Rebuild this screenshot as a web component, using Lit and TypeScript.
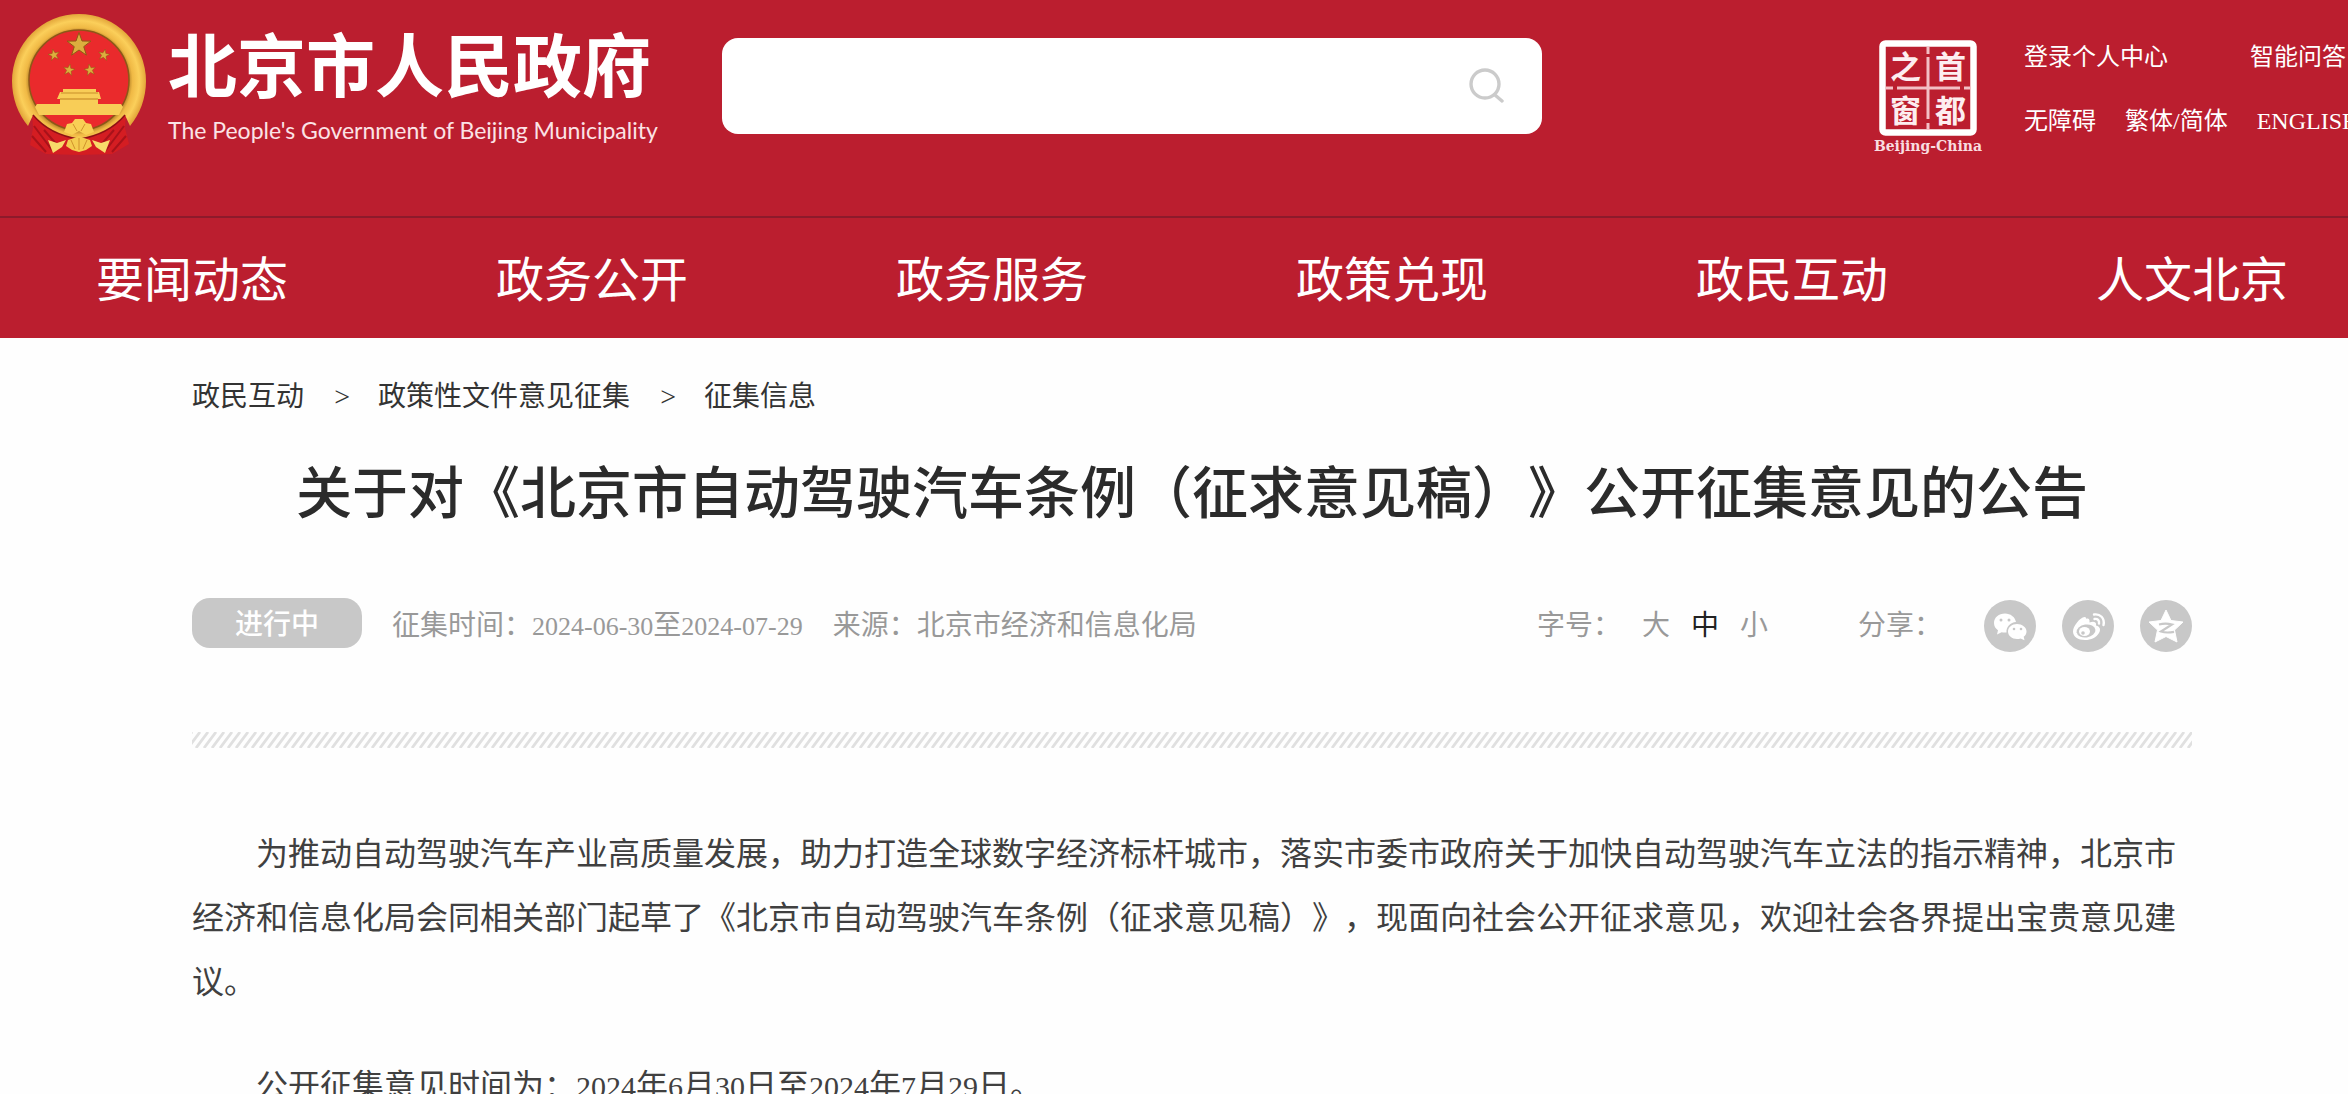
import { LitElement, html, css, svg } from "lit";
import { customElement, state } from "lit/decorators.js";

const NAV = ["要闻动态", "政务公开", "政务服务", "政策兑现", "政民互动", "人文北京"];
const CRUMBS = ["政民互动", "政策性文件意见征集", "征集信息"];
const SIZES = ["大", "中", "小"];

const STAR = "M0-10 2.4-3.2 9.5-3.1 3.8 1.3 5.9 8.1 0 4-5.9 8.1-3.8 1.3-9.5-3.1-2.4-3.2Z";
const star = (x: number, y: number, s: number, r = 0) =>
  svg`<path d=${STAR} transform="translate(${x} ${y}) rotate(${r}) scale(${s})" fill="#dcae3e" stroke="#8f5a14" stroke-width="0.8"/>`;

@customElement("national-emblem")
export class NationalEmblem extends LitElement {
  static styles = css`
    :host { display: block; }
    .art { display: block; width: 134px; height: 142px; }
  `;
  render() {
    return html`<svg class="art" viewBox="12 14 134 142" role="img" aria-label="国徽">
      <defs>
        <radialGradient id="gold" gradientUnits="userSpaceOnUse" cx="79" cy="81" r="67">
          <stop offset="0.74" stop-color="#b8862a" />
          <stop offset="0.8" stop-color="#f0b945" />
          <stop offset="0.9" stop-color="#fbcf5a" />
          <stop offset="1" stop-color="#e3a63a" />
        </radialGradient>
      </defs>
      <path d="M32 112 33 128 30 145 46 154 79 155 112 154 129 144 125 128 126 112Z" fill="#d41d22" />
      <path d="M34 126 52 150M32 136 46 152M124 126 106 150M126 136 112 152M44 130 58 146M114 130 100 146" stroke="#a8121a" stroke-width="2" fill="none" />
      <path d="M79 14A67 67 0 0 0 12 81C12 98 18 114 28 126L33 115C44 128 58 136 79 139C100 136 114 128 125 115L130 126C140 114 146 98 146 81A67 67 0 0 0 79 14Z" fill="url(#gold)" />
      <path d="M33 115C44 128 58 136 79 139C100 136 114 128 125 115" fill="none" stroke="#8f1015" stroke-width="1.5" />
      <circle cx="79" cy="80" r="50" fill="#ea2a2c" stroke="#8e5618" stroke-width="1.5" />
      ${star(79, 45, 1.25)}${star(54, 55, 0.6, -12)}${star(104, 55, 0.6, 12)}${star(69, 70, 0.6, 10)}${star(90, 70, 0.6, -10)}
      <path d="M63 89H96V92H99L101 99H98V104H121L123 107 119 115H39L35 107 37 104H60V99H57L60 92H63Z" fill="#f8cd57" />
      <path d="M61 93H98" stroke="#d9a338" stroke-width="1.5" />
      <path d="M60 99H98" stroke="#d39a33" stroke-width="1.5" />
      <path d="M64 132 67 124 72 123 75 119H83L86 123 91 124 94 132 86 135 79 131 72 135Z" fill="#f9cf55" />
      <path d="M66 146 68 140 74 138 79 136 84 138 90 140 92 146 86 150 79 152 72 150Z" fill="#f5cc50" />
      <path d="M48 140 57 143 66 140 62 147 53 153ZM110 140 101 143 92 140 96 147 105 153Z" fill="#f8da6a" />
      <path d="M71 140 75 149M79 138V150M87 140 83 149M73 124 77 131M85 124 81 131" stroke="#d0932c" stroke-width="1" fill="none" />
    </svg>`;
  }
}

@customElement("site-header")
export class SiteHeader extends LitElement {
  static styles = css`
    :host { display: block; background: #bb1e2f; color: #fff; text-spacing-trim: space-all; }
    a { color: inherit; text-decoration: none; white-space: nowrap; }
    .top { display: flex; align-items: flex-start; height: 216px; overflow: hidden; border-bottom: 2px solid #8d1a2b; }
    .brand { display: flex; align-items: flex-start; gap: 22px; padding: 14px 0 0 12px; flex: 0 0 710px; }
    .names { padding-top: 8px; white-space: nowrap; }
    .cn { font: 700 69px/80px "Noto Sans CJK SC", sans-serif; }
    .en { font: 400 23px/36px Lato, sans-serif; color: #fbe3e6; padding-top: 10px; }
    .search { display: flex; align-items: center; flex: 0 0 820px; height: 96px; margin-top: 38px; background: #fff; border-radius: 16px; overflow: hidden; }
    .field { flex: 1; min-width: 0; height: 100%; border: 0; outline: 0; padding: 0 28px; font: 32px "Liberation Serif", "Noto Sans CJK SC", serif; background: none; }
    .go { display: block; border: 0; background: none; padding: 0 38px 0 0; }
    .go svg { display: block; width: 36px; height: 36px; }
    .aside { display: flex; flex: 1; justify-content: flex-end; gap: 42px; min-width: 0; }
    .seal { display: flex; flex-direction: column; align-items: center; margin-top: 40px; }
    .seal svg { display: block; width: 98px; height: 96px; }
    .seal text { font: 700 31px "Noto Sans CJK SC", sans-serif; fill: #fdeef0; }
    .sealname { font: 700 14px/20px "DejaVu Serif", serif; color: #f9dde0; }
    .links { display: flex; flex-direction: column; gap: 28px; margin-top: 39px; width: 324px; font: 24px/36px "Liberation Serif", "Noto Sans CJK SC", serif; }
    .line { display: flex; }
    .wide { gap: 82px; }
    .narrow { gap: 29px; }
    .nav { display: flex; justify-content: space-between; padding: 6px 60px 0 96px; font: 48px/114px "Liberation Serif", "Noto Sans CJK SC", serif; }
  `;
  render() {
    return html`<header>
      <div class="top">
        <div class="brand">
          <national-emblem></national-emblem>
          <div class="names">
            <div class="cn">北京市人民政府</div>
            <div class="en">The People's Government of Beijing Municipality</div>
          </div>
        </div>
        <form class="search" role="search">
          <input class="field" type="search" aria-label="搜索" />
          <button class="go" type="button" aria-label="搜索">
            <svg viewBox="0 0 36 36" fill="none" stroke="#cbcbcb" stroke-width="3.4" stroke-linecap="round">
              <circle cx="17" cy="16" r="14" /><path d="M27 27 34 33" />
            </svg>
          </button>
        </form>
        <div class="aside">
          <a class="seal" href="#">
            <svg viewBox="0 0 98 96" role="img" aria-label="首都之窗">
              <rect x="3.5" y="3.5" width="91" height="89" rx="3" fill="none" stroke="#fff" stroke-width="6.5" />
              <path d="M49 7V14M49 17V79M49 83V90M7 48H14M18 48H81M85 48H92" stroke="#f3bfc5" stroke-width="3" />
              <text x="11" y="38">之</text><text x="56" y="38">首</text>
              <text x="11" y="82">窗</text><text x="56" y="82">都</text>
            </svg>
            <span class="sealname">Beijing-China</span>
          </a>
          <div class="links">
            <div class="line wide"><a href="#">登录个人中心</a><a href="#">智能问答</a></div>
            <div class="line narrow"><a href="#">无障碍</a><a href="#">繁体/简体</a><a href="#">ENGLISH</a></div>
          </div>
        </div>
      </div>
      <nav class="nav">${NAV.map((n) => html`<a href="#">${n}</a>`)}</nav>
    </header>`;
  }
}

@customElement("app-root")
export class AppRoot extends LitElement {
  @state() private size = "中";

  static styles = css`
    :host { display: block; height: 100vh; overflow-x: hidden; overflow-y: auto; scrollbar-width: none; background: #fefefe; color: #333; font-family: "Liberation Serif", "Noto Sans CJK SC", serif; text-spacing-trim: space-all; }
    a { color: inherit; text-decoration: none; }
    .page { padding: 39px 156px 0 192px; }
    .crumbs { display: flex; gap: 28px; font-size: 28px; line-height: 40px; }
    .sep { width: 18px; text-align: right; }
    .title { margin: 35px 0 0; font-size: 56px; line-height: 84px; font-weight: 500; text-align: center; color: #2b2b2b; }
    .meta { display: flex; align-items: center; margin-top: 62px; height: 56px; font-size: 28px; line-height: 40px; color: #999; white-space: nowrap; }
    .badge { align-self: flex-start; width: 170px; padding-top: 4px; line-height: 46px; border-radius: 18px; background: #c8c8c8; color: #fff; text-align: center; font-weight: 500; margin-right: 30px; }
    .date { font-size: 26px; }
    .info { display: flex; gap: 30px; flex: 1; }
    .sizes { display: flex; align-items: center; gap: 21px; margin-right: 90px; }
    .size { border: 0; padding: 0; background: none; font: inherit; color: inherit; }
    .on { color: #222; }
    .share { display: flex; align-items: center; gap: 26px; }
    .label { margin-right: 16px; }
    .share svg { display: block; width: 52px; height: 52px; }
    .rule { display: block; width: 100%; height: 16px; margin-top: 78px; }
    .text { padding-top: 74px; font-size: 32px; line-height: 64px; color: #404040; }
    .text p { margin: 0 0 40px; text-indent: 2em; }
    .num { font-size: 30px; }
  `;

  private num(n: string) {
    return html`<span class="num">${n}</span>`;
  }

  render() {
    return html`
      <site-header></site-header>
      <main class="page">
        <nav class="crumbs">
          ${CRUMBS.map((c, i) => html`${i ? html`<span class="sep">&gt;</span>` : ""}<a href="#">${c}</a>`)}
        </nav>
        <h1 class="title">关于对《北京市自动驾驶汽车条例（征求意见稿）》公开征集意见的公告</h1>
        <div class="meta">
          <span class="badge">进行中</span>
          <div class="info">
            <span>征集时间：<span class="date">2024-06-30</span>至<span class="date">2024-07-29</span></span>
            <span>来源：北京市经济和信息化局</span>
          </div>
          <div class="sizes">
            <span>字号：</span>
            ${SIZES.map((s) => html`<button class="size ${s === this.size ? "on" : ""}" @click=${() => (this.size = s)}>${s}</button>`)}
          </div>
          <div class="share">
            <span class="label">分享：</span>
            <a href="#" aria-label="微信"><svg viewBox="0 0 52 52">
              <circle cx="26" cy="26" r="26" fill="#c8c8c8" />
              <path d="M21 13.5C14.8 13.5 10 17.6 10 23 10 26 11.5 28.6 14 30.3L13 34.5 17.6 32.2C19 32.6 20.5 32.7 22.5 32.5 22 26.5 26.5 22.5 32 22 31 17 26.5 13.5 21 13.5Z" fill="#fff" />
              <path d="M33 24C28 24 24 27.2 24 31.5S28 39 33 39C34.3 39 35.5 38.8 36.6 38.4L40.5 40.3 39.7 36.8C41.5 35.5 42.5 33.6 42.5 31.5 42.5 27.2 38 24 33 24Z" fill="#fff" />
              <g fill="#c8c8c8"><circle cx="17" cy="20" r="1.5" /><circle cx="25" cy="20" r="1.5" /><circle cx="30" cy="29" r="1.3" /><circle cx="37" cy="29" r="1.3" /></g>
            </svg></a>
            <a href="#" aria-label="微博"><svg viewBox="0 0 52 52">
              <circle cx="26" cy="26" r="26" fill="#c8c8c8" />
              <path d="M24 19C26 18 28 18.5 27.5 22.5 31 21 35 21.5 34 25.5 38 26.5 39 29.5 37 33 34.5 37.5 29 40 23 40 16 40 11 36.5 11 31.5 11 26 18 17.5 22.5 17 24 17 24.5 18 24 19Z" fill="#fff" />
              <ellipse cx="24" cy="31" rx="9.5" ry="6.5" fill="#c8c8c8" transform="rotate(-8 24 31)" />
              <ellipse cx="22.5" cy="31.5" rx="5.5" ry="4.5" fill="#fff" />
              <circle cx="21" cy="33" r="1.8" fill="#c8c8c8" />
              <path d="M32 14.5C38 13.5 43 18 41.5 25M32.5 19C35.5 18.5 37.5 20.5 37 23.5" fill="none" stroke="#fff" stroke-width="2.4" stroke-linecap="round" />
            </svg></a>
            <a href="#" aria-label="QQ空间"><svg viewBox="0 0 52 52">
              <circle cx="26" cy="26" r="26" fill="#c8c8c8" />
              <path d="M26 10 31 20.5 43 22 34.5 30 37 42 26 36.5 15 42 17.5 30 9 22 21 20.5Z" fill="#fff" stroke="#fff" stroke-linejoin="round" />
              <path d="M19 24.5C23 23.5 28 23.5 32 24.5L21 31.5C25 32.8 29 32.8 34 31.8" fill="none" stroke="#c8c8c8" stroke-width="2.2" />
            </svg></a>
          </div>
        </div>
        <svg class="rule" aria-hidden="true">
          <defs>
            <pattern id="hatch" width="8" height="16" patternUnits="userSpaceOnUse">
              <path d="M-12 16 0 0M-4 16 8 0M4 16 16 0" stroke="#e0e0e0" stroke-width="2.8" />
            </pattern>
          </defs>
          <rect width="100%" height="16" fill="url(#hatch)" />
        </svg>
        <article class="text">
          <p>为推动自动驾驶汽车产业高质量发展，助力打造全球数字经济标杆城市，落实市委市政府关于加快自动驾驶汽车立法的指示精神，北京市经济和信息化局会同相关部门起草了《北京市自动驾驶汽车条例（征求意见稿）》，现面向社会公开征求意见，欢迎社会各界提出宝贵意见建议。</p>
          <p>公开征集意见时间为：${this.num("2024")}年${this.num("6")}月${this.num("30")}日至${this.num("2024")}年${this.num("7")}月${this.num("29")}日。</p>
        </article>
      </main>
    `;
  }
}
